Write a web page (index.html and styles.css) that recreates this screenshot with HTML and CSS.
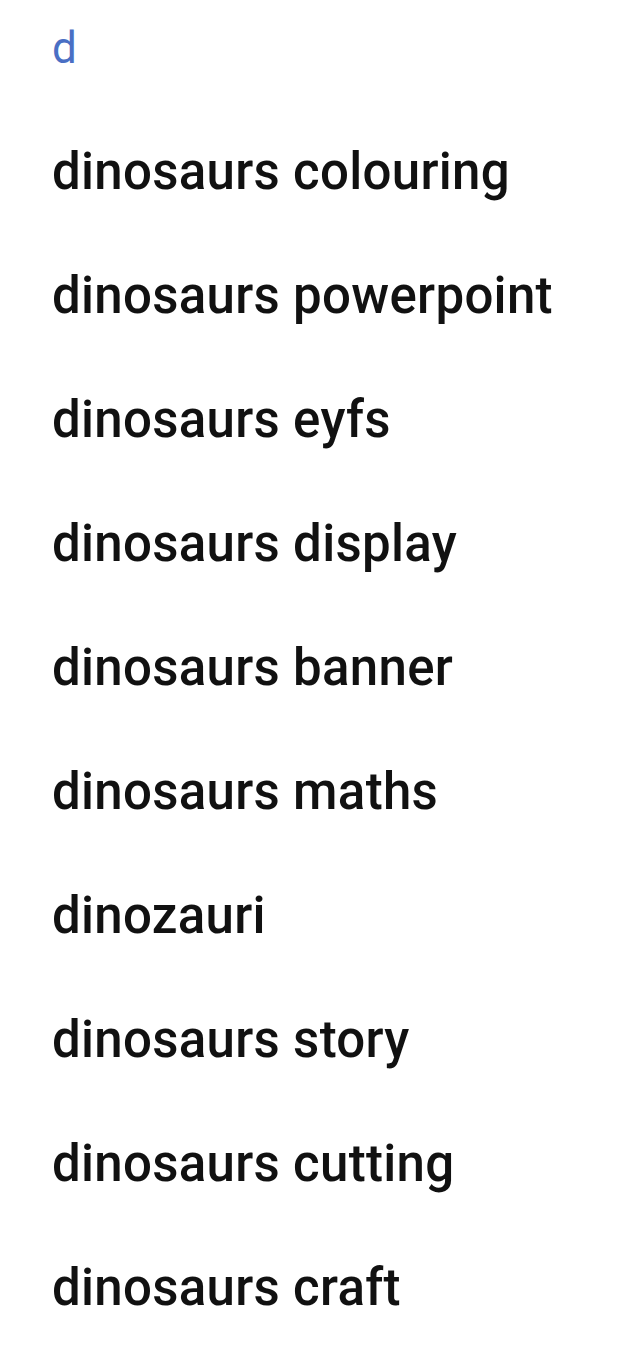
FILE: index.html
```html
<!DOCTYPE html>
<html>
<head>
<meta charset="utf-8">
<link rel="stylesheet" href="styles.css">
</head>
<body>
<ul class="suggestions">
  <li class="item query">d</li>
  <li class="item">dinosaurs colouring</li>
  <li class="item">dinosaurs powerpoint</li>
  <li class="item">dinosaurs eyfs</li>
  <li class="item">dinosaurs display</li>
  <li class="item">dinosaurs banner</li>
  <li class="item">dinosaurs maths</li>
  <li class="item">dinozauri</li>
  <li class="item">dinosaurs story</li>
  <li class="item">dinosaurs cutting</li>
  <li class="item">dinosaurs craft</li>
</ul>
</body>
</html>
```
FILE: styles.css
```css
html, body {
  margin: 0;
  padding: 0;
  background: #ffffff;
}
.suggestions {
  list-style: none;
  margin: 0;
  padding: 0 0 0 52px;
  font-family: Roboto, "Liberation Sans", sans-serif;
}
.item {
  height: 124px;
  line-height: 96px;
  font-size: 51px;
  font-weight: 500;
  letter-spacing: 0.3px;
  color: #111111;
  white-space: nowrap;
}
.query {
  font-size: 44px;
  letter-spacing: 0;
  color: #4a6fc4;
  font-weight: 400;
}
```
